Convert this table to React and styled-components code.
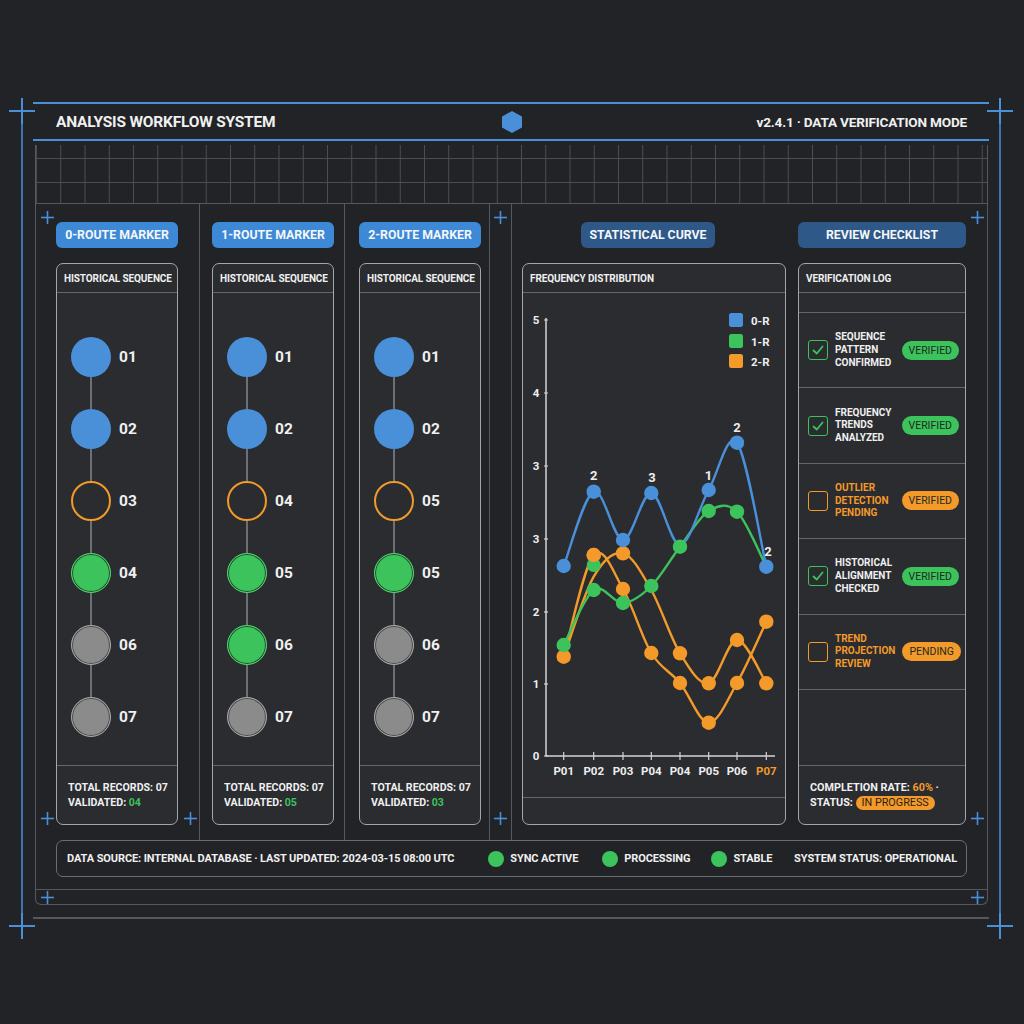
import React from "react";
import styled, { createGlobalStyle } from "styled-components";

const FONT = `Roboto, "Liberation Sans", sans-serif`;

const BLUE = "#4a90d9";
const GREEN = "#3cc35c";
const ORANGE = "#f39a2a";
const LINE = "#55585e";
const CARD_LINE = "#a3a6ab";

const GlobalStyle = createGlobalStyle`
  body {
    margin: 0;
    background: #212326;
    color: #f0f0f0;
    font-family: ${FONT};
  }
  * { box-sizing: border-box; }
`;

const Page = styled.div`
  width: 1024px;
  height: 1024px;
  padding-top: 93px;
  overflow: hidden;
`;

const Frame = styled.div`
  position: relative;
  margin: 0 23px 0 21px;
  border-left: 2px solid #3f73ad;
  border-right: 2px solid #3f73ad;
`;

const Header = styled.header`
  margin: 9px 10px 0 10px;
  height: 39px;
  border-top: 2px solid ${BLUE};
  border-bottom: 2px solid ${BLUE};
  display: grid;
  grid-template-columns: 1fr auto 1fr;
  align-items: center;
  padding: 0 22px 0 23px;
  font-size: 15.5px;
  font-weight: 700;
  letter-spacing: -0.2px;
  white-space: nowrap;
`;

const HeaderRight = styled.div`
  justify-self: end;
  font-size: 13.6px;
`;

const Inner = styled.div`
  margin: 4px 11px 0 12px;
  border: 1px solid ${LINE};
  border-top: none;
  border-radius: 0 0 6px 6px;
`;

const GridBand = styled.div`
  height: 59px;
  border-bottom: 1px solid ${LINE};
  background-image:
    linear-gradient(to right, #4b4e53 1px, transparent 1px),
    linear-gradient(
      to bottom,
      transparent 13px,
      #4b4e53 13px,
      #4b4e53 14px,
      transparent 14px,
      transparent 37px,
      #4b4e53 37px,
      #4b4e53 38px,
      transparent 38px
    );
  background-size: 24.25px 100%, 100% 100%;
`;

const ContentRow = styled.div`
  position: relative;
  display: flex;
  height: 636px;
`;

const SeqColumn = styled.section`
  width: ${(p) => p.$w}px;
  padding: 18px ${(p) => p.$w - p.$pl - 123}px 15px ${(p) => p.$pl}px;
  border-right: 1px solid ${LINE};
  display: flex;
  flex-direction: column;
`;

const Spacer = styled.div`
  width: 22px;
  border-right: 1px solid ${LINE};
`;

const RightGroup = styled.div`
  flex: 1;
  display: flex;
  gap: 12px;
  padding: 18px 21px 15px 10px;
`;

const Section = styled.div`
  width: ${(p) => p.$w}px;
  display: flex;
  flex-direction: column;
`;

const Pill = styled.div`
  height: 26px;
  border-radius: 6px;
  background: ${(p) => (p.$dark ? "#2d5887" : "#3d89d6")};
  color: #f4f6f8;
  font-size: 12.3px;
  font-weight: 700;
  white-space: nowrap;
  display: flex;
  align-items: center;
  justify-content: center;
  margin-bottom: 15px;
  ${(p) => p.$width && `width: ${p.$width}px; margin-left: ${p.$ml}px;`}
`;

const Card = styled.div`
  flex: 1;
  border: 1.5px solid ${CARD_LINE};
  border-radius: 7px;
  background: #2a2c30;
  display: flex;
  flex-direction: column;
  overflow: hidden;
`;

const CardHead = styled.div`
  height: 29px;
  flex: none;
  padding: 0 7px;
  display: flex;
  align-items: center;
  font-size: 10px;
  font-weight: 700;
  letter-spacing: -0.1px;
  white-space: nowrap;
  border-bottom: 1.5px solid #63666b;
`;

const NodeList = styled.div`
  display: flex;
  flex-direction: column;
  padding: 44px 0 0 14px;
`;

const NodeRow = styled.div`
  display: flex;
  align-items: center;
  gap: 8px;
  font-size: 15.5px;
  font-weight: 700;
`;

const nodeStyles = {
  blue: `background: ${BLUE}; border: none;`,
  ring: `background: transparent; border: 2.5px solid ${ORANGE};`,
  green: `background: ${GREEN}; border: 1.5px solid #52d370; box-shadow: inset 0 0 0 1px #1f4a2a;`,
  grey: `background: #8b8b8b; border: 1.5px solid #a8a8a8; box-shadow: inset 0 0 0 1px #4a4a4a;`,
};

const Node = styled.div`
  width: 40px;
  height: 40px;
  border-radius: 50%;
  flex: none;
  ${(p) => nodeStyles[p.$kind]}
`;

const Connector = styled.div`
  width: 1.5px;
  height: 32px;
  margin-left: 19.25px;
  background: #6c6f74;
`;

const CardFoot = styled.div`
  margin-top: auto;
  border-top: 1.5px solid #63666b;
  padding: 14px 10px 14px 11px;
  font-size: ${(p) => p.$fs || 10.6}px;
  font-weight: 700;
  line-height: 15px;
  white-space: nowrap;
  height: 59px;
`;

const Green = styled.span`
  color: ${GREEN};
`;

const Orange = styled.span`
  color: ${ORANGE};
`;

const ChartArea = styled.div`
  flex: 1;
  position: relative;
`;

const EmptyFoot = styled.div`
  height: 27px;
  border-top: 1.5px solid #63666b;
`;

const BlankRow = styled.div`
  height: 20px;
  border-bottom: 1.5px solid #63666b;
`;

const CheckRow = styled.div`
  height: 75.4px;
  border-bottom: 1.5px solid #63666b;
  display: flex;
  align-items: center;
  padding: 0 6px 0 9px;
  gap: 7px;
`;

const CheckBox = styled.div`
  width: 20px;
  height: 20px;
  flex: none;
  border-radius: 3px;
  border: 1.5px solid ${(p) => (p.$done ? GREEN : ORANGE)};
  display: flex;
  align-items: center;
  justify-content: center;
`;

const CheckText = styled.div`
  width: 62px;
  font-size: 10px;
  font-weight: 700;
  line-height: 12.7px;
  white-space: nowrap;
  color: ${(p) => (p.$done ? "#f0f0f0" : ORANGE)};
`;

const Badge = styled.span`
  margin-left: auto;
  height: 19px;
  padding: 0 7px;
  border-radius: 10px;
  background: ${(p) => (p.$tone === "green" ? GREEN : ORANGE)};
  color: #1e2a22;
  font-size: 10.5px;
  font-weight: 400;
  display: inline-flex;
  align-items: center;
`;

const StatusPill = styled.span`
  display: inline-block;
  background: ${ORANGE};
  color: #2a1e10;
  font-weight: 400;
  border-radius: 8px;
  padding: 0 6px;
  line-height: 14px;
`;

const FooterBar = styled.div`
  margin: 0 20px;
  height: 37px;
  border: 1.5px solid #6a6d72;
  border-radius: 7px;
  display: flex;
  align-items: center;
  padding: 0 9px 0 10px;
  font-size: 11px;
  font-weight: 700;
  letter-spacing: -0.1px;
  white-space: nowrap;
`;

const StatusItem = styled.div`
  display: flex;
  align-items: center;
  gap: 6px;
  margin-left: ${(p) => p.$ml}px;
`;

const Dot = styled.span`
  width: 16px;
  height: 16px;
  border-radius: 50%;
  background: ${GREEN};
`;

const SysStatus = styled.div`
  margin-left: auto;
`;

const BottomRow = styled.div`
  position: relative;
  margin-top: 12px;
  height: 15px;
  border-top: 1px solid ${LINE};
`;

const BottomLine = styled.div`
  margin: 12px 10px 0 10px;
  height: 2px;
  background: #55585e;
`;

const CrossMark = styled.svg`
  position: absolute;
  left: ${(p) => p.$x - p.$s / 2}px;
  top: ${(p) => p.$y - p.$s / 2}px;
  width: ${(p) => p.$s}px;
  height: ${(p) => p.$s}px;
  pointer-events: none;
`;

function Cross({ x, y, size = 13, w = 1.6 }) {
  const h = size / 2;
  return (
    <CrossMark $x={x} $y={y} $s={size} viewBox={`0 0 ${size} ${size}`}>
      <line x1={h} y1={0} x2={h} y2={size} stroke={BLUE} strokeWidth={w} />
      <line x1={0} y1={h} x2={size} y2={h} stroke={BLUE} strokeWidth={w} />
    </CrossMark>
  );
}

function Hexagon() {
  return (
    <svg width="22" height="24" viewBox="0 0 22 24">
      <polygon points="11,1 21,6.5 21,17.5 11,23 1,17.5 1,6.5" fill={BLUE} />
    </svg>
  );
}

function Check() {
  return (
    <svg width="14" height="14" viewBox="0 0 14 14">
      <path d="M2.5 7.5 L5.8 10.5 L11.5 3.5" fill="none" stroke={GREEN} strokeWidth="1.8" strokeLinecap="round" strokeLinejoin="round" />
    </svg>
  );
}

const routes = [
  { name: "0-ROUTE MARKER", w: 164, pl: 20, validated: "04", nodes: [["blue", "01"], ["blue", "02"], ["ring", "03"], ["green", "04"], ["grey", "06"], ["grey", "07"]] },
  { name: "1-ROUTE MARKER", w: 145, pl: 12, validated: "05", nodes: [["blue", "01"], ["blue", "02"], ["ring", "04"], ["green", "05"], ["green", "06"], ["grey", "07"]] },
  { name: "2-ROUTE MARKER", w: 145, pl: 14, validated: "03", nodes: [["blue", "01"], ["blue", "02"], ["ring", "05"], ["green", "05"], ["grey", "06"], ["grey", "07"]] },
];

const checks = [
  { lines: ["SEQUENCE", "PATTERN", "CONFIRMED"], done: true, badge: "VERIFIED", tone: "green" },
  { lines: ["FREQUENCY", "TRENDS", "ANALYZED"], done: true, badge: "VERIFIED", tone: "green" },
  { lines: ["OUTLIER", "DETECTION", "PENDING"], done: false, badge: "VERIFIED", tone: "orange" },
  { lines: ["HISTORICAL", "ALIGNMENT", "CHECKED"], done: true, badge: "VERIFIED", tone: "green" },
  { lines: ["TREND", "PROJECTION", "REVIEW"], done: false, badge: "PENDING", tone: "orange" },
];

// chart geometry (px inside the chart area)
const XS = [40.7, 70.7, 100, 128.3, 157, 185.7, 214, 243.3];
const XL = ["P01", "P02", "P03", "P04", "P04", "P05", "P06", "P07"];
const YL = [["5", 27], ["4", 100], ["3", 173], ["3", 246], ["2", 319], ["1", 391], ["0", 463]];

const series = [
  { color: ORANGE, ys: [363.7, 283.7, 260.3, 297, 360.3, 390.3, 347, 390.3], marks: [2, 4, 5, 6, 7] },
  { color: ORANGE, ys: [363.7, 262, 296, 360, 390, 429.7, 390, 328.7], marks: [0, 1, 2, 3, 4, 5, 6, 7] },
  { color: GREEN, ys: [352, 297, 310, 293, 253.7, 218, 218.7, 273.7], marks: [0, 1, 2, 3, 4, 5, 6] },
  { color: BLUE, ys: [273, 198.7, 247, 200, 252, 197, 149.7, 273.7], marks: [0, 1, 2, 3, 5, 6, 7] },
];

const peakLabels = [
  [70.7, 187, "2"],
  [129, 189, "3"],
  [185.5, 187, "1"],
  [214, 139, "2"],
  [245, 263, "2"],
];

function smoothPath(pts) {
  let d = `M${pts[0][0]},${pts[0][1]}`;
  for (let i = 0; i < pts.length - 1; i++) {
    const p0 = pts[i - 1] || pts[i];
    const p1 = pts[i];
    const p2 = pts[i + 1];
    const p3 = pts[i + 2] || p2;
    const c1x = p1[0] + (p2[0] - p0[0]) / 6;
    const c1y = p1[1] + (p2[1] - p0[1]) / 6;
    const c2x = p2[0] - (p3[0] - p1[0]) / 6;
    const c2y = p2[1] - (p3[1] - p1[1]) / 6;
    d += ` C${c1x},${c1y} ${c2x},${c2y} ${p2[0]},${p2[1]}`;
  }
  return d;
}

const ChartText = styled.text`
  font-family: ${FONT};
  font-size: 11.5px;
  font-weight: 700;
  fill: #eeeeee;
`;

function Chart() {
  const axis = "#d4d4d4";
  return (
    <svg width="261" height="504" viewBox="0 0 261 504" style={{ display: "block" }}>
      <line x1="23" y1="25" x2="23" y2="463" stroke={axis} strokeWidth="1.5" />
      <line x1="23" y1="463" x2="252" y2="463" stroke={axis} strokeWidth="1.5" />
      {YL.map(([t, y], i) => (
        <g key={i}>
          <line x1="21" y1={y} x2="25" y2={y} stroke={axis} strokeWidth="1.2" />
          <ChartText x="13" y={y + 4} textAnchor="middle">{t}</ChartText>
        </g>
      ))}
      {XS.map((x, i) => (
        <g key={i}>
          <line x1={x} y1="459" x2={x} y2="467" stroke={axis} strokeWidth="1.2" />
          <ChartText x={x} y="482" textAnchor="middle" style={i === 7 ? { fill: ORANGE } : null}>
            {XL[i]}
          </ChartText>
        </g>
      ))}
      {series.map((s, i) => (
        <path key={i} d={smoothPath(XS.map((x, j) => [x, s.ys[j]]))} fill="none" stroke={s.color} strokeWidth="2.4" />
      ))}
      {series.map((s, i) =>
        s.marks.map((j) => <circle key={`${i}-${j}`} cx={XS[j]} cy={s.ys[j]} r="7.2" fill={s.color} />)
      )}
      <circle cx={XS[1]} cy="272" r="7" fill={GREEN} />
      <circle cx={XS[1]} cy="262" r="7.2" fill={ORANGE} />
      {peakLabels.map(([x, y, t], i) => (
        <ChartText key={i} x={x} y={y} textAnchor="middle" style={{ fontSize: 13 }}>{t}</ChartText>
      ))}
      {[["0-R", BLUE, 27], ["1-R", GREEN, 48], ["2-R", ORANGE, 68]].map(([t, c, y]) => (
        <g key={t}>
          <rect x="206" y={y - 7} width="14" height="14" rx="2.5" fill={c} />
          <ChartText x="228" y={y + 4.5}>{t}</ChartText>
        </g>
      ))}
    </svg>
  );
}

export default function App() {
  return (
    <Page>
      <GlobalStyle />
      <Frame>
        <Cross x={-1} y={9} size={26} w={2} />
        <Cross x={977} y={9} size={26} w={2} />
        <Cross x={-1} y={824} size={26} w={2} />
        <Cross x={977} y={824} size={26} w={2} />

        <Header>
          <div>ANALYSIS WORKFLOW SYSTEM</div>
          <Hexagon />
          <HeaderRight>v2.4.1 · DATA VERIFICATION MODE</HeaderRight>
        </Header>

        <Inner>
          <GridBand />
          <ContentRow>
            {routes.map((r) => (
              <SeqColumn key={r.name} $w={r.w} $pl={r.pl}>
                <Pill>{r.name}</Pill>
                <Card>
                  <CardHead>HISTORICAL SEQUENCE</CardHead>
                  <NodeList>
                    {r.nodes.map(([kind, label], i) => (
                      <React.Fragment key={i}>
                        {i > 0 && <Connector />}
                        <NodeRow>
                          <Node $kind={kind} />
                          {label}
                        </NodeRow>
                      </React.Fragment>
                    ))}
                  </NodeList>
                  <CardFoot>
                    TOTAL RECORDS: 07
                    <br />
                    VALIDATED: <Green>{r.validated}</Green>
                  </CardFoot>
                </Card>
              </SeqColumn>
            ))}
            <Spacer />
            <RightGroup>
              <Section $w={264}>
                <Pill $dark $width={134} $ml={59}>STATISTICAL CURVE</Pill>
                <Card>
                  <CardHead>FREQUENCY DISTRIBUTION</CardHead>
                  <ChartArea>
                    <Chart />
                  </ChartArea>
                  <EmptyFoot />
                </Card>
              </Section>
              <Section $w={168}>
                <Pill $dark>REVIEW CHECKLIST</Pill>
                <Card>
                  <CardHead>VERIFICATION LOG</CardHead>
                  <BlankRow />
                  {checks.map((c, i) => (
                    <CheckRow key={i}>
                      <CheckBox $done={c.done}>{c.done && <Check />}</CheckBox>
                      <CheckText $done={c.done}>
                        {c.lines.map((l) => (
                          <div key={l}>{l}</div>
                        ))}
                      </CheckText>
                      <Badge $tone={c.tone}>{c.badge}</Badge>
                    </CheckRow>
                  ))}
                  <CardFoot $fs={10.8}>
                    COMPLETION RATE: <Orange>60%</Orange> ·
                    <br />
                    STATUS: <StatusPill>IN PROGRESS</StatusPill>
                  </CardFoot>
                </Card>
              </Section>
            </RightGroup>

            <Cross x={11} y={13} />
            <Cross x={11} y={614} />
            <Cross x={154} y={614} />
            <Cross x={464} y={13} />
            <Cross x={464} y={614} />
            <Cross x={941} y={13} />
            <Cross x={941} y={614} />
          </ContentRow>

          <FooterBar>
            <div>DATA SOURCE: INTERNAL DATABASE · LAST UPDATED: 2024-03-15 08:00 UTC</div>
            <StatusItem $ml={34}>
              <Dot />
              SYNC ACTIVE
            </StatusItem>
            <StatusItem $ml={24}>
              <Dot />
              PROCESSING
            </StatusItem>
            <StatusItem $ml={21}>
              <Dot />
              STABLE
            </StatusItem>
            <SysStatus>SYSTEM STATUS: OPERATIONAL</SysStatus>
          </FooterBar>

          <BottomRow>
            <Cross x={11} y={7} />
            <Cross x={941} y={7} />
          </BottomRow>
        </Inner>
        <BottomLine />
      </Frame>
    </Page>
  );
}
